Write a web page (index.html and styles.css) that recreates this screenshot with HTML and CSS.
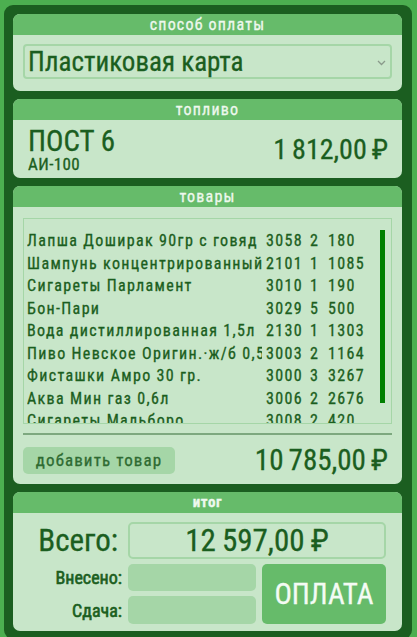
FILE: index.html
```html
<!DOCTYPE html>
<html lang="ru">
<head>
<meta charset="utf-8">
<title>Касса</title>
<link rel="stylesheet" href="styles.css">
</head>
<body>
<div class="frame">
  <section class="card card-pay">
    <header class="card-head">способ оплаты</header>
    <div class="card-body pay-body">
      <div class="select">
        <span class="select-text">Пластиковая карта</span>
        <svg class="chev" width="9" height="6" viewBox="0 0 9 6"><path d="M1 1 L4.5 4.5 L8 1" fill="none" stroke="#8a9a8b" stroke-width="1.3"/></svg>
      </div>
    </div>
  </section>

  <section class="card card-fuel">
    <header class="card-head">топливо</header>
    <div class="card-body fuel-body">
      <div class="fuel-left">
        <div class="post">ПОСТ 6</div>
        <div class="grade">АИ-100</div>
      </div>
      <div class="money fuel-sum">1 812,00 ₽</div>
    </div>
  </section>

  <section class="card card-goods">
    <header class="card-head">товары</header>
    <div class="card-body goods-body">
      <div class="list">
        <div class="row"><span class="name">Лапша Доширак 90гр с говяд</span><span>3058</span><span>2</span><span>180</span></div>
        <div class="row"><span class="name">Шампунь концентрированный</span><span>2101</span><span>1</span><span>1085</span></div>
        <div class="row"><span class="name">Сигареты Парламент</span><span>3010</span><span>1</span><span>190</span></div>
        <div class="row"><span class="name">Бон-Пари</span><span>3029</span><span>5</span><span>500</span></div>
        <div class="row"><span class="name">Вода дистиллированная 1,5л</span><span>2130</span><span>1</span><span>1303</span></div>
        <div class="row"><span class="name">Пиво Невское Оригин.·ж/б 0,5л</span><span>3003</span><span>2</span><span>1164</span></div>
        <div class="row"><span class="name">Фисташки Амро 30 гр.</span><span>3000</span><span>3</span><span>3267</span></div>
        <div class="row"><span class="name">Аква Мин газ 0,6л</span><span>3006</span><span>2</span><span>2676</span></div>
        <div class="row"><span class="name">Сигареты Мальборо</span><span>3008</span><span>2</span><span>420</span></div>
        <div class="thumb"></div>
      </div>
      <div class="sep"></div>
      <div class="goods-foot">
        <button class="add-btn">добавить товар</button>
        <div class="money goods-sum">10 785,00 ₽</div>
      </div>
    </div>
  </section>

  <section class="card card-total">
    <header class="card-head head-bold">итог</header>
    <div class="card-body total-body">
      <div class="lbl lbl-big">Всего:</div>
      <div class="total-box">12 597,00 ₽</div>
      <div class="lbl">Внесено:</div>
      <div class="inp"></div>
      <button class="pay-btn">ОПЛАТА</button>
      <div class="lbl">Сдача:</div>
      <div class="inp"></div>
    </div>
  </section>
</div>
</body>
</html>
```
FILE: styles.css
```css
* { box-sizing: border-box; }
html, body { margin: 0; }
body {
  background: #4caf50;
  padding: 5px 5px 7px 4px;
  font-family: "Roboto Condensed", Roboto, sans-serif;
  color: #1b5e20;
  -webkit-text-stroke: 0.3px currentColor;
}
.frame {
  background: #1b5e20;
  border-radius: 9px;
  padding: 9px 10px 8px 9px;
  display: flex;
  flex-direction: column;
  gap: 8px;
}
.card {
  background: #c8e6c9;
  border-radius: 7px;
  overflow: hidden;
}
.card-head {
  background: #66bb6a;
  color: #eef8ee;
  text-align: center;
  font-size: 16px;
  line-height: 21px;
  height: 21px;
  font-weight: 400;
  letter-spacing: 1.2px;
}
.head-bold { font-weight: 700; font-size: 15px; letter-spacing: 0.6px; }

/* payment */
.pay-body { padding: 9px 10px 12px 10px; }
.select {
  height: 35px;
  border: 2px solid #a5d6a7;
  border-radius: 4px;
  display: flex;
  align-items: center;
  justify-content: space-between;
  padding: 0 4px 0 3px;
}
.select-text { font-size: 27px; font-weight: 400; line-height: 30px; }
.chev { display: block; margin-top: 2px; }

/* fuel */
.fuel-body {
  height: 58px;
  padding: 3px 14px 0 15px;
  display: flex;
  align-items: center;
  justify-content: space-between;
}
.fuel-left { display: flex; flex-direction: column; }
.post { font-size: 29px; line-height: 27px; font-weight: 400; }
.grade { font-size: 17px; line-height: 18px; font-weight: 400; letter-spacing: 0.4px; }
.money { font-size: 28px; font-weight: 400; white-space: nowrap; word-spacing: -1.5px; }
.fuel-sum { margin-top: -2px; }

/* goods */
.goods-body { padding: 11px 10px 7px 10px; }
.list {
  position: relative;
  height: 206px;
  border: 1px solid #a5d6a7;
  overflow: hidden;
  padding: 11px 0 0 3px;
}
.row {
  display: grid;
  grid-template-columns: 239px 44px 18px 1fr;
  font-size: 16px;
  line-height: 22.5px;
  height: 22.5px;
  font-weight: 400;
  letter-spacing: 1.35px;
  white-space: nowrap;
}
.name { overflow: hidden; margin-right: 4px; }
.thumb {
  position: absolute;
  right: 6px;
  top: 11px;
  width: 5px;
  height: 173px;
  background: #008000;
}
.sep {
  height: 2px;
  background: #7da87f;
  margin: 9px 0 8px;
}
.goods-foot {
  display: flex;
  justify-content: space-between;
  align-items: center;
  padding-right: 4px;
}
.goods-sum { font-size: 29px; }
.add-btn {
  width: 152px;
  height: 27px;
  border: none;
  border-radius: 5px;
  background: #a5d6a7;
  color: #2e6b32;
  font-family: inherit;
  font-size: 17px;
  font-weight: 400;
  letter-spacing: 1.1px;
  padding: 0;
  -webkit-text-stroke: 0.3px #2e6b32;
}

/* total */
.total-body {
  display: grid;
  grid-template-columns: 99px 128px 124px;
  grid-template-rows: 37px 27px 28px;
  column-gap: 6px;
  row-gap: 5px;
  padding: 9px 16px 7px 10px;
}
.lbl {
  text-align: right;
  font-size: 18px;
  font-weight: 400;
  align-self: center;
  -webkit-text-stroke: 0.6px currentColor;
}
.lbl-big { font-size: 31px; padding-right: 4px; -webkit-text-stroke: 0.3px currentColor; }
.total-box {
  grid-column: 2 / 4;
  border: 2px solid #a5d6a7;
  border-radius: 5px;
  text-align: center;
  font-size: 31px;
  font-weight: 400;
  line-height: 33px;
  word-spacing: -1px;
}
.inp { background: #a5d6a7; border-radius: 5px; }
.pay-btn {
  grid-column: 3;
  grid-row: 2 / 4;
  border: none;
  border-radius: 5px;
  background: #66bb6a;
  color: #f4fbf4;
  font-family: inherit;
  font-size: 29px;
  font-weight: 400;
  padding: 0;
  -webkit-text-stroke: 0.3px #f4fbf4;
}
```
